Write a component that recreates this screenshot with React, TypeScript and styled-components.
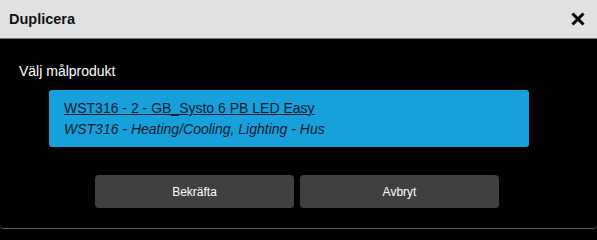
import * as React from 'react'
import styled, { createGlobalStyle } from 'styled-components'

const GlobalStyle = createGlobalStyle`
    html, body {
        margin: 0;
        padding: 0;
        background: #000;
        font-family: 'Liberation Sans', Arial, sans-serif;
    }
`

const StyledDialog = styled.div`
    width: 597px;
    height: 229px;
    box-sizing: border-box;
    background: #000;
    border-bottom: 1px solid #5a5a5a;
    border-radius: 0 0 4px 4px;
    display: flex;
    flex-direction: column;
`

const StyledHeader = styled.div`
    height: 38px;
    background: #e1e1e1;
    border-bottom: 1px solid #7a7a7a;
    display: flex;
    align-items: center;
    justify-content: space-between;
    padding: 0 11px 0 9px;
`

const StyledTitle = styled.span`
    font-size: 14.5px;
    font-weight: 700;
    color: #111;
`

const StyledClose = styled.button`
    border: none;
    background: none;
    padding: 0;
    width: 16px;
    height: 16px;
    display: flex;
    cursor: pointer;
`

const StyledBody = styled.div`
    flex: 1;
    padding: 24px 0 0 19px;
    display: flex;
    flex-direction: column;
`

const StyledLabel = styled.div`
    font-size: 14px;
    color: #fff;
    line-height: 17px;
`

const StyledProduct = styled.div`
    margin: 10px 0 0 30px;
    width: 480px;
    height: 57px;
    box-sizing: border-box;
    background: #16a0dc;
    border-radius: 3px;
    padding: 8px 15px;
    color: #0b1b2b;
    font-size: 14px;
    line-height: 21px;
`

const StyledProductName = styled.div`
    text-decoration: underline;
`

const StyledProductInfo = styled.div`
    font-style: italic;
`

const StyledButtonRow = styled.div`
    display: flex;
    gap: 6px;
    margin: 28px 0 0 76px;
`

const StyledButton = styled.button`
    width: 199px;
    height: 33px;
    border: none;
    border-radius: 4px;
    background: #404040;
    color: #fff;
    font-family: 'Liberation Sans', Arial, sans-serif;
    font-size: 12px;
    cursor: pointer;
`

const App = () => {
    return (
        <>
            <GlobalStyle />
            <StyledDialog>
                <StyledHeader>
                    <StyledTitle>Duplicera</StyledTitle>
                    <StyledClose aria-label="Stäng">
                        <svg width="16" height="16" viewBox="0 0 16 16">
                            <path d="M3.5 3.5 L12.5 12.5 M12.5 3.5 L3.5 12.5" stroke="#000" strokeWidth="3" strokeLinecap="square" />
                        </svg>
                    </StyledClose>
                </StyledHeader>
                <StyledBody>
                    <StyledLabel>Välj målprodukt</StyledLabel>
                    <StyledProduct>
                        <StyledProductName>WST316 - 2 - GB_Systo 6 PB LED Easy</StyledProductName>
                        <StyledProductInfo>WST316 - Heating/Cooling, Lighting - Hus</StyledProductInfo>
                    </StyledProduct>
                    <StyledButtonRow>
                        <StyledButton>Bekräfta</StyledButton>
                        <StyledButton>Avbryt</StyledButton>
                    </StyledButtonRow>
                </StyledBody>
            </StyledDialog>
        </>
    )
}

export default App
